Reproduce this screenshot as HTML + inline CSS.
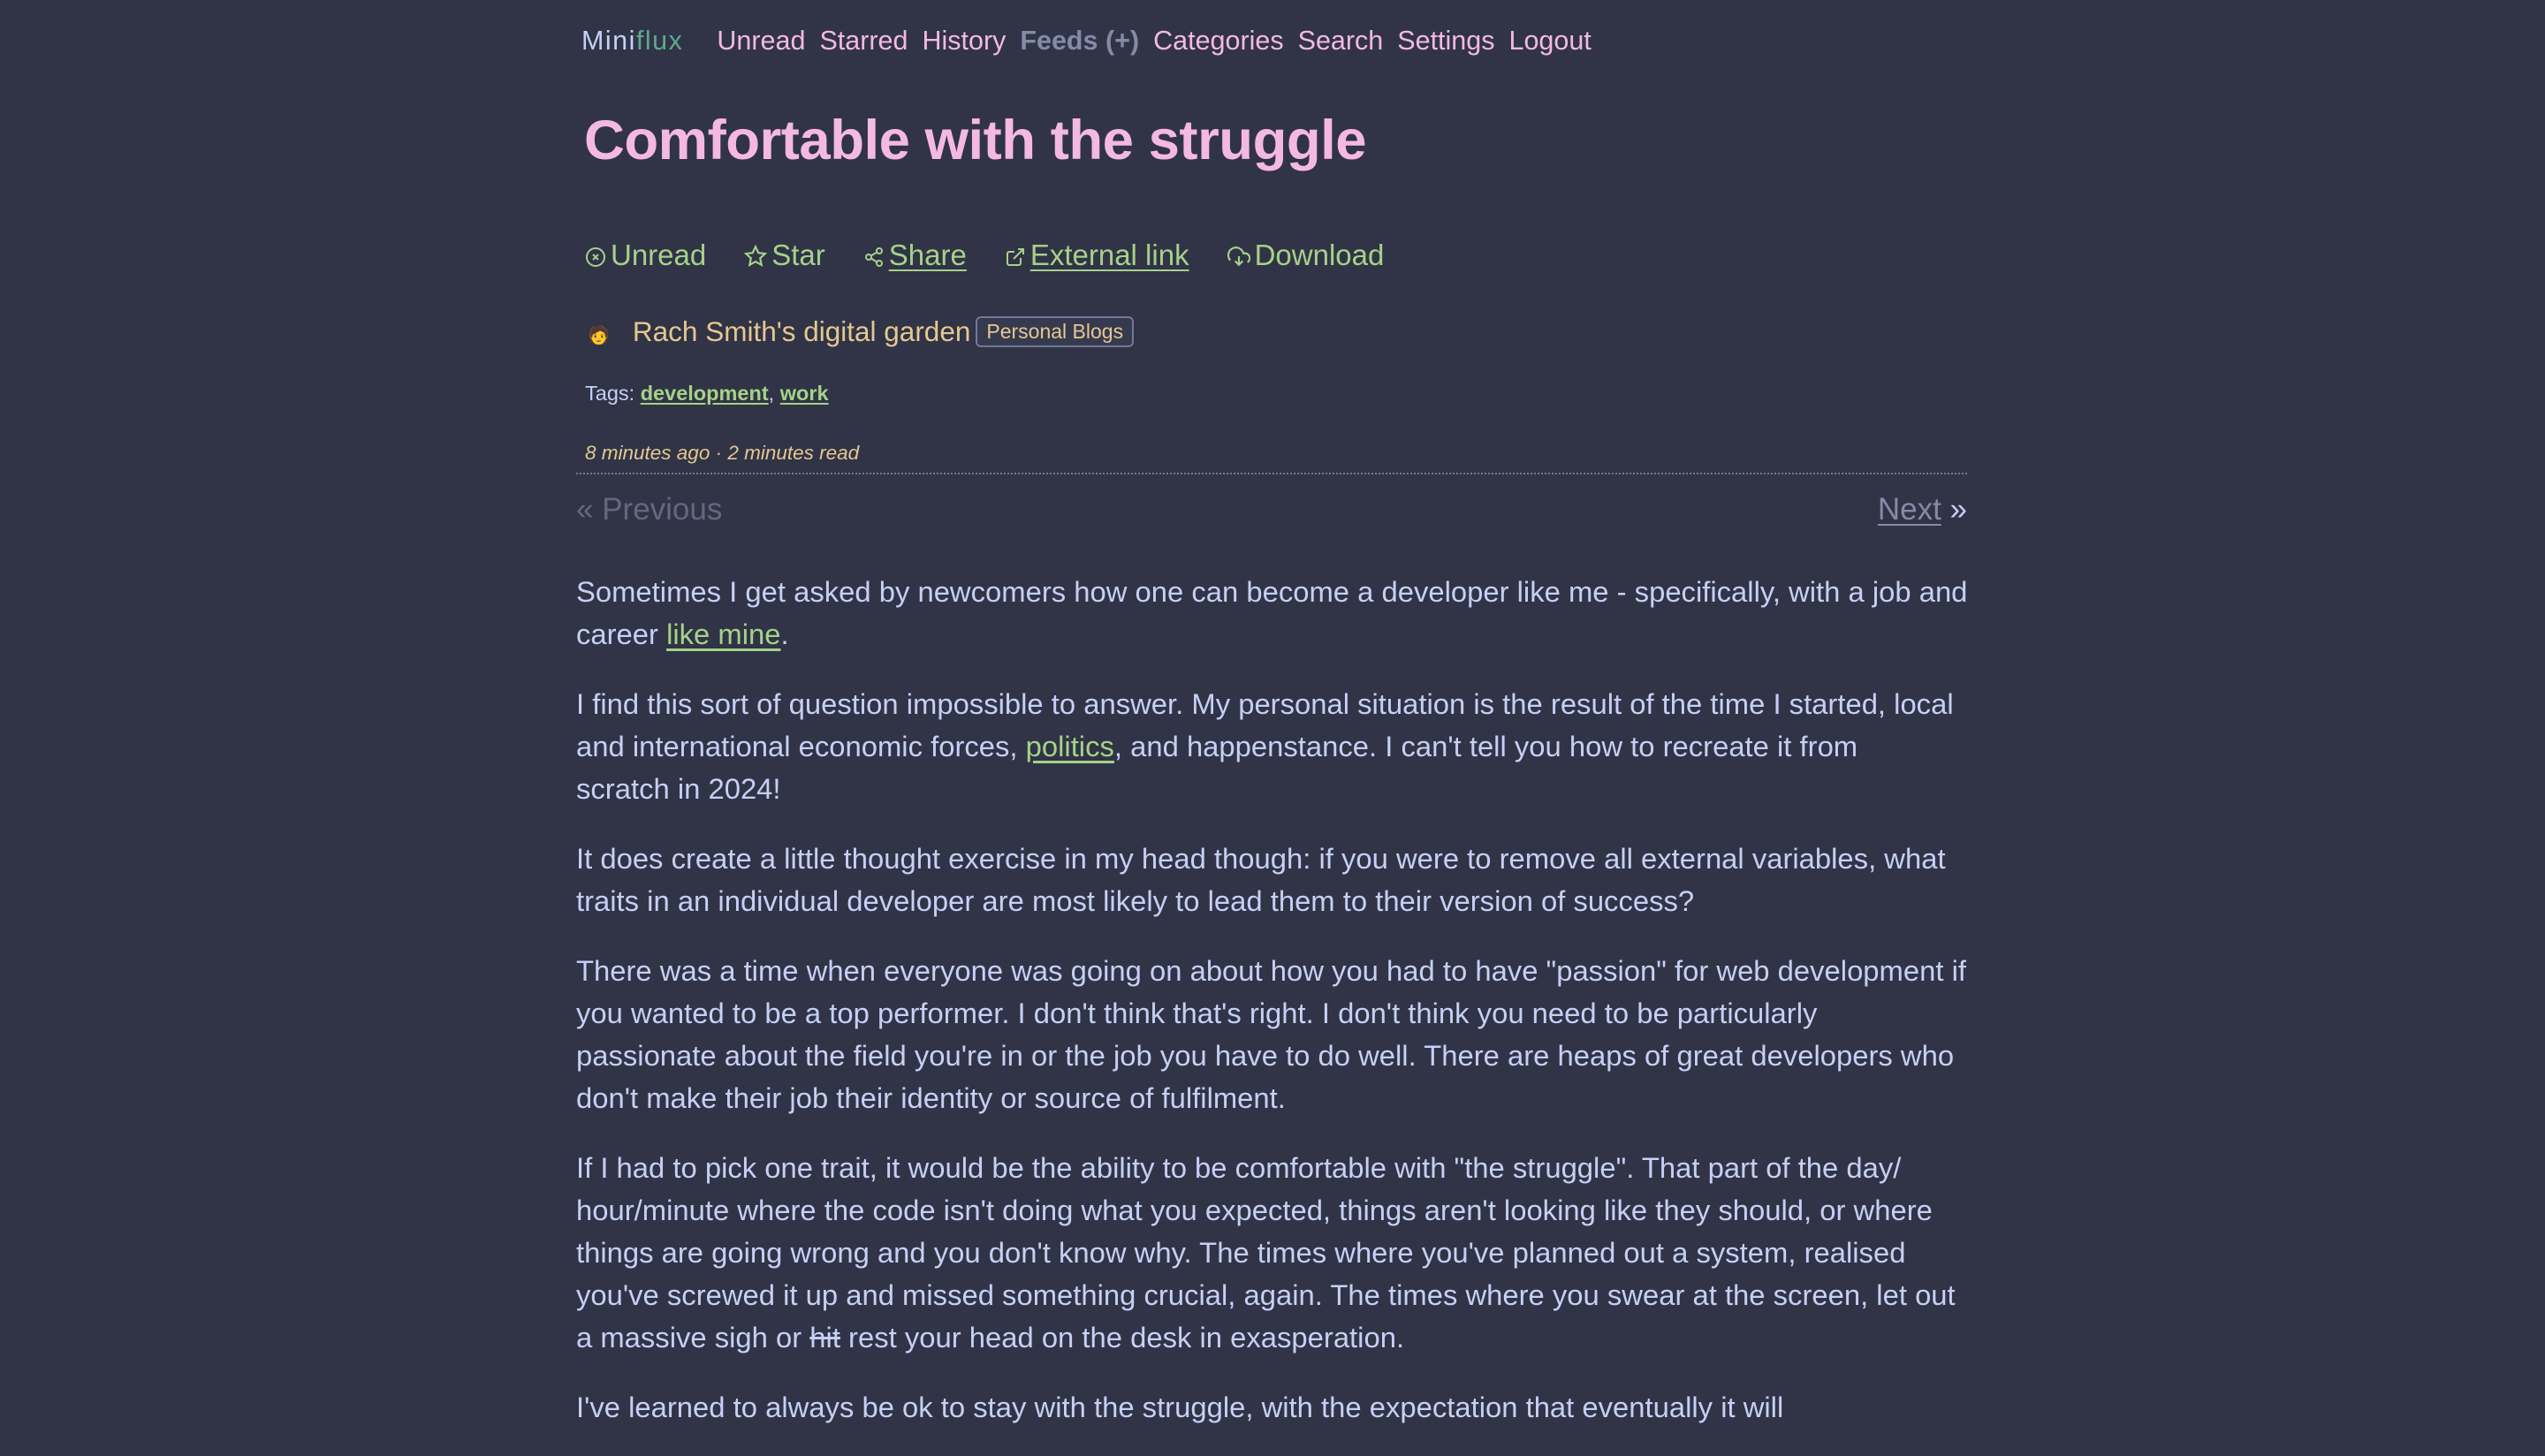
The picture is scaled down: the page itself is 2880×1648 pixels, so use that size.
<!DOCTYPE html>
<html><head><meta charset="utf-8"><style>
html,body{margin:0;padding:0;background:#303446;width:2880px;height:1582px;overflow:hidden;font-family:"Liberation Sans",sans-serif;color:#c6d0f5}
.a{position:absolute;white-space:nowrap}
.nav{top:29px;left:658px;font-size:30.5px;color:#f4b8e4}
.nav span{margin-right:16px}
.logo{color:#c6d0f5;margin-right:38px!important;letter-spacing:1.5px}
.logo b{font-weight:normal;color:#5fa88a}
h1{position:absolute;margin:0;top:123px;left:661px;font-size:63.5px;font-weight:bold;color:#f4b8e4;white-space:nowrap;letter-spacing:-0.5px}
.act{top:270px;left:662px;font-size:33px;color:#a6d189}
.act span{margin-right:43px}
.act u{text-decoration-thickness:2px;text-underline-offset:5px}
.act svg{vertical-align:-3px;margin-right:5px}
.feed{top:357px;left:665px;font-size:31.5px;color:#e5c890}
.badge{display:inline-block;font-size:23px;border:2px solid #737994;border-radius:6px;padding:2px 10px;margin-left:6px;vertical-align:3px;background:#363a4f}
.tags{top:432px;left:662px;font-size:23.5px;color:#c6d0f5}
.tags a{color:#a6d189;font-weight:bold;text-decoration:underline;text-underline-offset:3px}
.time{top:500px;left:662px;font-size:22.5px;font-style:italic;color:#e5c890}
.hr{position:absolute;top:535px;left:652px;width:1574px;border-top:2px dotted #737994}
.prev{top:557px;left:652px;font-size:35px;color:#626880}
.next{top:557px;right:654px;font-size:35px;color:#c6d0f5}
.next u{color:#838ba7;text-decoration-thickness:2px;text-underline-offset:5px}
.body{position:absolute;top:646px;left:652px;font-size:32.8px;line-height:48px;white-space:nowrap}
.body p{margin:0 0 31px 0}
.body a{color:#a6d189;text-decoration:underline;text-underline-offset:5px}
</style></head><body>
<div class="a nav"><span class="logo">Mini<b>flux</b></span><span>Unread</span><span>Starred</span><span>History</span><span style="color:#838ba7;font-weight:bold">Feeds (+)</span><span>Categories</span><span>Search</span><span>Settings</span><span>Logout</span></div>
<h1>Comfortable with the struggle</h1>
<div class="a act">
<span><svg width="24" height="24" viewBox="0 0 24 24" fill="none" stroke="#a6d189" stroke-width="2"><circle cx="12" cy="12" r="10"/><path d="M9 9l6 6M15 9l-6 6"/></svg>Unread</span><span><svg width="26" height="26" viewBox="0 0 24 24" fill="none" stroke="#a6d189" stroke-width="2"><path d="M12 2l3 6.5 7 .8-5.2 4.8 1.4 7L12 17.6 5.8 21.1l1.4-7L2 9.3l7-.8z"/></svg>Star</span><span><svg width="24" height="24" viewBox="0 0 24 24" fill="none" stroke="#a6d189" stroke-width="2"><circle cx="18" cy="5" r="3"/><circle cx="6" cy="12" r="3"/><circle cx="18" cy="19" r="3"/><path d="M8.6 13.5l6.8 4M15.4 6.5l-6.8 4"/></svg><u>Share</u></span><span><svg width="24" height="24" viewBox="0 0 24 24" fill="none" stroke="#a6d189" stroke-width="2"><path d="M18 13v6a2 2 0 0 1-2 2H5a2 2 0 0 1-2-2V8a2 2 0 0 1 2-2h6M15 3h6v6M10 14L21 3"/></svg><u>External link</u></span><span><svg width="26" height="26" viewBox="0 0 24 24" fill="none" stroke="#a6d189" stroke-width="2"><path d="M8 17l4 4 4-4M12 12v9M20.9 18.3A5 5 0 0 0 18 9h-1.3A8 8 0 1 0 3 16.3"/></svg>Download</span></div>
<div class="a feed"><span style="font-size:20px;margin-right:26px">🧑</span>Rach Smith's digital garden<span class="badge">Personal Blogs</span></div>
<div class="a tags">Tags: <a>development</a>, <a>work</a></div>
<div class="a time">8 minutes ago · 2 minutes read</div>
<div class="hr"></div>
<div class="a prev">« Previous</div>
<div class="a next"><u>Next</u> »</div>
<div class="body">
<p>Sometimes I get asked by newcomers how one can become a developer like me - specifically, with a job and<br>career <a>like mine</a>.</p>
<p>I find this sort of question impossible to answer. My personal situation is the result of the time I started, local<br>and international economic forces, <a>politics</a>, and happenstance. I can't tell you how to recreate it from<br>scratch in 2024!</p>
<p>It does create a little thought exercise in my head though: if you were to remove all external variables, what<br>traits in an individual developer are most likely to lead them to their version of success?</p>
<p>There was a time when everyone was going on about how you had to have "passion" for web development if<br>you wanted to be a top performer. I don't think that's right. I don't think you need to be particularly<br>passionate about the field you're in or the job you have to do well. There are heaps of great developers who<br>don't make their job their identity or source of fulfilment.</p>
<p>If I had to pick one trait, it would be the ability to be comfortable with "the struggle". That part of the day/<br>hour/minute where the code isn't doing what you expected, things aren't looking like they should, or where<br>things are going wrong and you don't know why. The times where you've planned out a system, realised<br>you've screwed it up and missed something crucial, again. The times where you swear at the screen, let out<br>a massive sigh or <s>hit</s> rest your head on the desk in exasperation.</p>
<p>I've learned to always be ok to stay with the struggle, with the expectation that eventually it will</p>
</div>
</body></html>
